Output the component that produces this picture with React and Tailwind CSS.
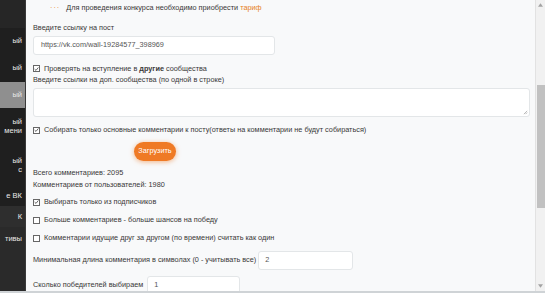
import React from "react";

function Box({ checked }) {
  return (
    <span className="inline-flex items-center justify-center w-[7px] h-[7px] border border-[#666] bg-white mr-[4px] shrink-0">
      {checked && (
        <svg viewBox="0 0 8 8" className="w-[6px] h-[6px]">
          <path d="M1 4.2 L3.2 6.2 L7 1.5" fill="none" stroke="#333" strokeWidth="1.2" />
        </svg>
      )}
    </span>
  );
}

function Check({ checked, children, className = "" }) {
  return (
    <div className={`flex items-center leading-[12px] ${className}`}>
      <Box checked={checked} />
      <span>{children}</span>
    </div>
  );
}

const sideItems = [
  { h: 30, t: [""], bg: "bg-[#262626]" },
  { h: 28, t: ["ый"] },
  { h: 30, t: ["ый"] },
  { h: 28, t: ["ый"], bg: "bg-[#8f8f8f]" },
  { h: 40, t: ["ый", "мени"] },
  { h: 42, t: ["ый", "с"] },
  { h: 24, t: ["е ВК"] },
  { h: 22, t: ["К"], bg: "bg-[#2e2e2e]" },
  { h: 24, t: ["тивы"], bg: "bg-[#2a2a2a]" },
  { h: 45, t: [""], bg: "bg-[#2a2a2a]" },
];

export default function App() {
  return (
    <div className="w-[545px] h-[293px] overflow-hidden flex bg-[#f8f9fa] font-['Liberation_Sans',Arial,sans-serif] text-[7.3px] text-[#383838] border-b-[2px] border-[#cfd3d6]">
      <aside className="w-[26px] shrink-0 bg-[#1f1f1f] overflow-hidden flex flex-col border-r border-[#3a3a3a]">
        {sideItems.map((it, i) => (
          <div
            key={i}
            style={{ height: it.h }}
            className={`flex flex-col justify-center items-end pr-[3px] text-[#e8e8e8] text-[7.5px] leading-[9px] whitespace-nowrap ${it.bg || ""}`}
          >
            {it.t.map((s, j) => (
              <span key={j}>{s}</span>
            ))}
          </div>
        ))}
      </aside>

      <main className="flex-1 pl-[7px] pt-[2px] overflow-hidden">
        <div className="flex items-center leading-[12px] pl-[17px]">
          <span className="text-[#e67e22] tracking-[1px] mr-[6px]">···</span>
          <span>
            Для проведения конкурса необходимо приобрести <span className="text-[#e67e22]">тариф</span>
          </span>
        </div>

        <div className="mt-[8px] leading-[12px]">Введите ссылку на пост</div>
        <div className="mt-[2px] w-[242px] h-[19px] bg-white border border-[#e3e6e8] rounded-[3px] flex items-center pl-[7px] text-[#555]">
          https://vk.com/wall-19284577_398969
        </div>

        <Check checked className="mt-[8px] !leading-[11px]">
          Проверять на вступление в <b className="font-bold">другие</b> сообщества
        </Check>
        <div className="leading-[12px]">Введите ссылки на доп. сообщества (по одной в строке)</div>
        <div className="mt-[2px] w-[497px] h-[29px] bg-white border border-[#e3e6e8] rounded-[3px] relative">
          <svg viewBox="0 0 6 6" className="absolute right-[1px] bottom-[1px] w-[5px] h-[5px]">
            <path d="M1 5 L5 1 M3 5 L5 3" stroke="#999" strokeWidth="0.8" />
          </svg>
        </div>

        <Check checked className="mt-[7px]">
          Собирать только основные комментарии к посту(ответы на комментарии не будут собираться)
        </Check>

        <button className="mt-[6px] ml-[101px] w-[42px] h-[19px] rounded-full bg-[#ef7a25] text-white text-[7.3px] shadow-[0_1px_5px_rgba(239,122,37,0.55)] flex items-center justify-center">
          Загрузить
        </button>

        <div className="mt-[6px] leading-[12px]">Всего комментариев: 2095</div>
        <div className="leading-[12px]">Комментариев от пользователей: 1980</div>

        <Check checked className="mt-[5px]">Выбирать только из подписчиков</Check>
        <Check className="mt-[6px]">Больше комментариев - больше шансов на победу</Check>
        <Check className="mt-[6px]">Комментарии идущие друг за другом (по времени) считать как один</Check>

        <div className="mt-[7px] flex items-center">
          <span>Минимальная длина комментария в символах (0 - учитывать все)</span>
          <div className="ml-[2px] w-[95px] h-[19px] bg-white border border-[#e3e6e8] rounded-[3px] flex items-center pl-[6px] text-[#555]">
            2
          </div>
        </div>
        <div className="mt-[6px] flex items-center">
          <span>Сколько победителей выбираем</span>
          <div className="ml-[4px] w-[93px] h-[19px] bg-white border border-[#e3e6e8] rounded-[3px] flex items-center pl-[6px] text-[#555]">
            1
          </div>
        </div>
      </main>

      <div className="w-[10px] shrink-0 bg-[#f1f1f1] border-l border-[#e2e2e2] flex flex-col items-center">
        <svg viewBox="0 0 6 4" className="w-[5px] h-[4px] mt-[3px]">
          <path d="M0 4 L3 0 L6 4 Z" fill="#a3a3a3" />
        </svg>
        <div className="mt-[78px] w-[8px] h-[123px] bg-[#c1c1c1]" />
        <div className="flex-1" />
        <svg viewBox="0 0 6 4" className="w-[5px] h-[4px] mb-[3px]">
          <path d="M0 0 L3 4 L6 0 Z" fill="#a3a3a3" />
        </svg>
      </div>
    </div>
  );
}
